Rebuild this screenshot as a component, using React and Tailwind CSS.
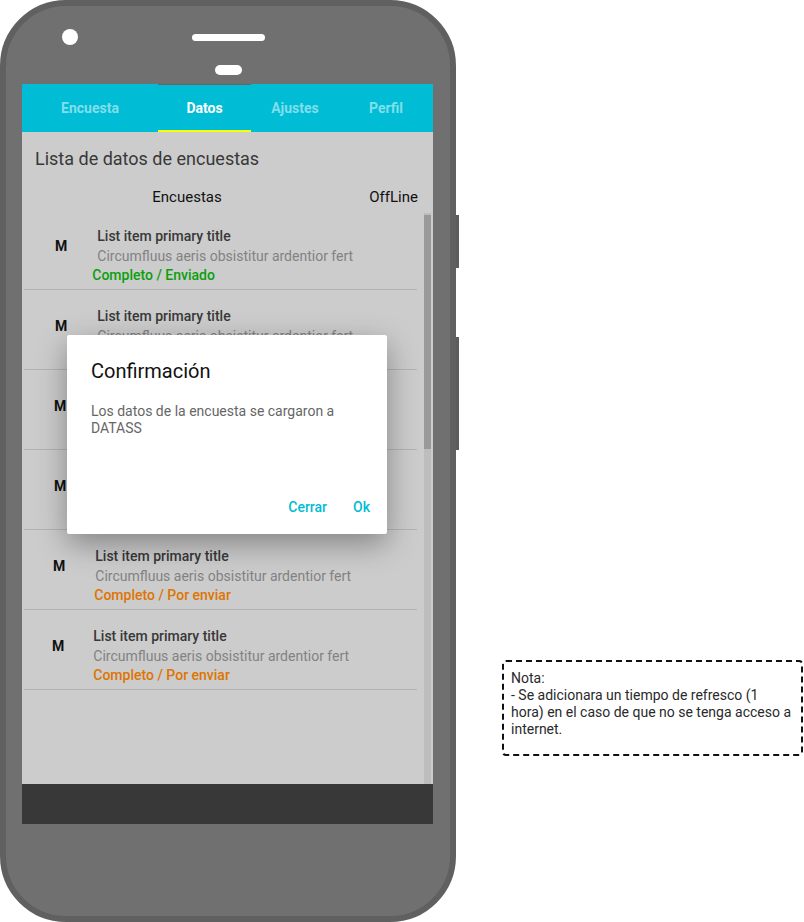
import React from "react";

const tabs = [
  { label: "Encuesta", w: "w-[136px]", active: false },
  { label: "Datos", w: "w-[93px]", active: true },
  { label: "Ajustes", w: "w-[88px]", active: false },
  { label: "Perfil", w: "w-[94px]", active: false },
];

const items = [
  { m: "pl-[31px]", text: "ml-[25px]", title: "pl-[5px]", status: "Completo / Enviado", color: "text-[#09a00b]" },
  { m: "pl-[31px]", text: "ml-[25px]", title: "pl-[5px]", status: "Completo / Enviado", color: "text-[#09a00b]" },
  { m: "pl-[30px]", text: "ml-[25px]", title: "pl-[5px]", status: "Completo / Enviado", color: "text-[#09a00b]" },
  { m: "pl-[30px]", text: "ml-[25px]", title: "pl-[5px]", status: "Completo / Por enviar", color: "text-[#df7400]" },
  { m: "pl-[29px]", text: "ml-[29px]", title: "pl-[1px]", status: "Completo / Por enviar", color: "text-[#df7400]" },
  { m: "pl-[28px]", text: "ml-[29px]", title: "pl-0", status: "Completo / Por enviar", color: "text-[#df7400]" },
];

const App = () => {
  return (
    <div className="w-[804px] h-[922px] bg-white flex items-start font-['Roboto',sans-serif]">
      {/* Phone */}
      <div className="relative w-[456px] h-[922px] shrink-0 rounded-[66px] border-[6px] border-[#606060] bg-[#707070]">
        {/* side buttons */}
        <div className="absolute right-[-9px] top-[209px] w-[3px] h-[53px] bg-[#5c5c5c]" />
        <div className="absolute right-[-9px] top-[331px] w-[3px] h-[113px] bg-[#5c5c5c]" />

        {/* top: camera + speaker */}
        <div className="h-[78px]">
          <div className="flex items-center pt-[23px]">
            <div className="ml-[56px] w-4 h-4 rounded-full bg-white" />
            <div className="ml-[114px] w-[73px] h-[7px] rounded-full bg-white" />
          </div>
          <div className="ml-[209px] mt-[20px] w-[27px] h-[10px] rounded-full bg-white" />
        </div>

        {/* Screen */}
        <div className="ml-[16px] w-[411px] h-[740px] flex flex-col">
          {/* Tabs */}
          <div className="flex h-[48px] bg-[#00bcd4]">
            {tabs.map((t) => (
              <div
                key={t.label}
                className={`${t.w} relative flex items-center justify-center text-[14px] font-bold ${
                  t.active ? "text-white border-t border-[#666666]" : "text-[#80dfeb]"
                }`}
              >
                <span>{t.label}</span>
                {t.active && <div className="absolute left-0 right-0 bottom-0 h-[2px] bg-[#ffff00]" />}
              </div>
            ))}
          </div>

          {/* Content */}
          <div className="relative flex-1 flex flex-col bg-[#cccccc]">
            <h1 className="pt-[15px] pl-[13px] text-[18px] leading-[24px] text-[#383838]">
              Lista de datos de encuestas
            </h1>
            <div className="mt-[16px] flex h-[20px] text-[15px] leading-[20px] text-[#111111]">
              <div className="w-[330px] text-center">Encuestas</div>
              <div className="ml-auto pr-[15px]">OffLine</div>
            </div>

            <div className="mt-[3px] flex flex-1">
              <div className="ml-[2px] w-[393px] flex flex-col">
                {items.map((it, i) => (
                  <div key={i} className="h-[80px] flex border-b border-[#b3b3b3]">
                    <div className={`${it.m} pt-[26px] text-[14px] leading-[20px] font-bold text-[#111111]`}>M</div>
                    <div className={`${it.text} pt-[16px] flex flex-col`}>
                      <div className={`${it.title} text-[14px] leading-[20px] font-medium text-[#383838]`}>
                        List item primary title
                      </div>
                      <div className={`${it.title} text-[14px] leading-[20px] text-[#828282]`}>
                        Circumfluus aeris obsistitur ardentior fert
                      </div>
                      <div className={`text-[14px] leading-[18px] font-medium ${it.color}`}>{it.status}</div>
                    </div>
                  </div>
                ))}
              </div>
              {/* scrollbar */}
              <div className="ml-auto mr-[2px] mt-[3px] w-[7px] bg-[#bdbdbd]">
                <div className="mt-[2px] h-[234px] bg-[#999999]" />
              </div>
            </div>

            {/* Dialog */}
            <div className="absolute left-[45px] top-[203px] w-[320px] h-[199px] bg-white rounded-[2px] shadow-[0_10px_30px_rgba(0,0,0,0.35)] flex flex-col px-[24px]">
              <div className="pt-[22px] text-[20px] leading-[28px] text-[#111111]">Confirmación</div>
              <p className="mt-[18px] text-[14px] leading-[17px] text-[#666666]">
                Los datos de la encuesta se cargaron a DATASS
              </p>
              <div className="mt-auto mb-[18px] -mr-[7px] flex justify-end gap-[26px] text-[14px] leading-[18px] font-medium text-[#00bcd4]">
                <span>Cerrar</span>
                <span>Ok</span>
              </div>
            </div>
          </div>

          {/* bottom nav bar */}
          <div className="h-[40px] bg-[#383838]" />
        </div>
      </div>

      {/* Note */}
      <div className="ml-[46px] mt-[660px] w-[301px] h-[96px] border-2 border-dashed border-[#111111] rounded-[4px] pl-[7px] pt-[8px] text-[14px] leading-[17px] text-[#2a2a2a]">
        Nota:
        <br />- Se adicionara un tiempo de refresco (1
        <br />
        hora) en el caso de que no se tenga acceso a
        <br />
        internet.
      </div>
    </div>
  );
};

export default App;
